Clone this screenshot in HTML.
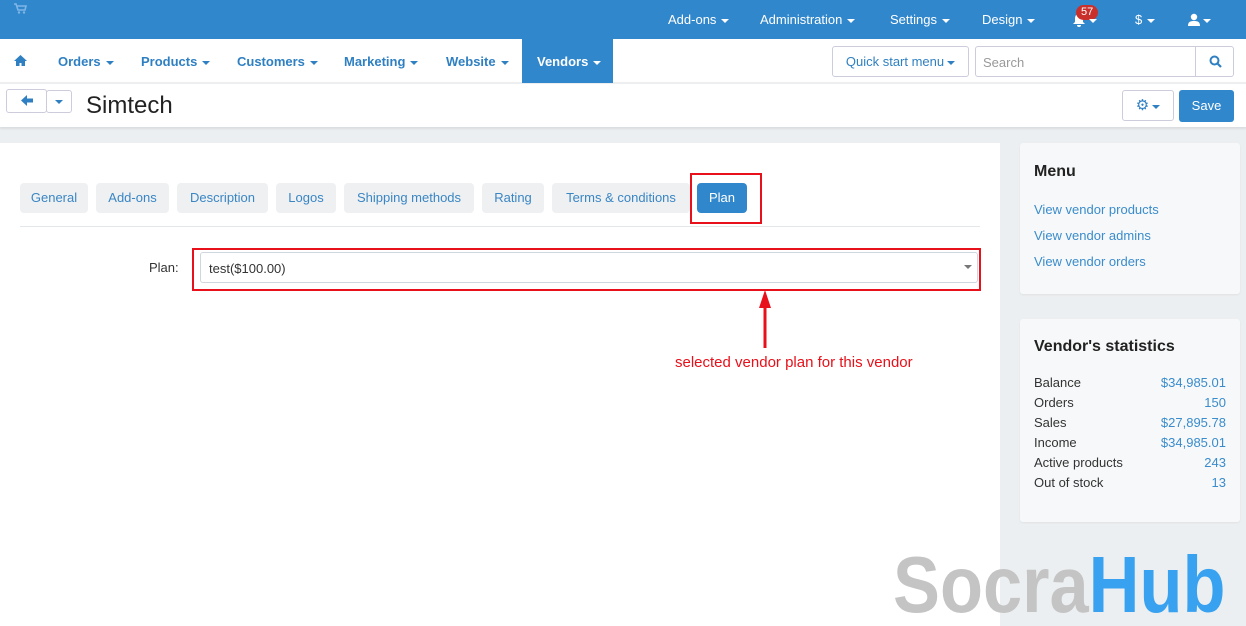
<!DOCTYPE html>
<html><head><meta charset="utf-8"><style>
*{margin:0;padding:0;box-sizing:border-box}
html,body{width:1246px;height:626px;overflow:hidden}
body{background:#eceff1;font-family:"Liberation Sans",Arial,sans-serif;font-size:13px;position:relative}
.a{position:absolute}
.top{left:0;top:0;width:1246px;height:39px;background:#3187cc}
.top span{position:absolute;top:12px;color:#fff;font-size:13px}
.car{display:inline-block;border-left:4px solid transparent;border-right:4px solid transparent;border-top:4px solid currentColor;vertical-align:middle;margin-left:5px}
.nav{left:0;top:39px;width:1246px;height:44px;background:#fff;border-bottom:1px solid #eee}
.nav span{position:absolute;top:15px;color:#2f80c2;font-weight:bold;font-size:13px}
.bar{left:0;top:84px;width:1246px;height:43px;background:#fff;box-shadow:0 2px 2px rgba(0,0,0,.08)}
.btn{position:absolute;border:1px solid #ccd;border-radius:3px;background:#fff}
.tab{position:absolute;top:183px;height:30px;background:#eef0f2;border-radius:4px;color:#3a86c4;font-size:13px;line-height:30px;text-align:center}
.card{position:absolute;left:1020px;width:220px;background:#f7f8f9;border-radius:3px;box-shadow:0 1px 2px rgba(0,0,0,.06)}
.card a{display:block;color:#3a8ccc;font-size:13px;text-decoration:none}
.row{display:flex;justify-content:space-between;font-size:13px;color:#333;height:20px;line-height:20px}
.row b{font-weight:normal;color:#3a8ccc}
</style></head><body>
<div class="a top">
<svg class="a" style="left:14px;top:3px" width="13" height="11" viewBox="0 0 13 11"><path d="M0 1h2l2 6h7l1-4H3" fill="none" stroke="#7fb6e6" stroke-width="1.6"/><circle cx="5" cy="9.5" r="1.2" fill="#7fb6e6"/><circle cx="10" cy="9.5" r="1.2" fill="#7fb6e6"/></svg>
<span style="left:668px">Add-ons<i class="car"></i></span>
<span style="left:760px">Administration<i class="car"></i></span>
<span style="left:890px">Settings<i class="car"></i></span>
<span style="left:982px">Design<i class="car"></i></span>
<svg class="a" style="left:1072px;top:13px" width="14" height="14" viewBox="0 0 14 14"><path d="M7 1c3 0 4 2 4 5v3l2 2H1l2-2V6c0-3 1-5 4-5z M5 12h4a2 2 0 0 1-4 0z" fill="#fff"/></svg>
<div class="a" style="left:1076px;top:5px;background:#c9302c;color:#fff;font-size:11px;border-radius:8px;padding:0 5px;height:15px;line-height:15px">57</div>
<span style="left:1089px;top:12px"><i class="car" style="margin:0"></i></span>
<span style="left:1135px">$<i class="car"></i></span>
<svg class="a" style="left:1188px;top:13px" width="12" height="13" viewBox="0 0 12 13"><circle cx="6" cy="4" r="3.2" fill="#fff"/><path d="M0 13c0-4 2-5 6-5s6 1 6 5z" fill="#fff"/></svg>
<span style="left:1203px"><i class="car" style="margin:0"></i></span>
</div>
<div class="a nav">
<svg class="a" style="left:14px;top:16px" width="13" height="11" viewBox="0 0 13 11"><path d="M6.5 0L0 6h2v5h3.5V8h2v3H11V6h2z" fill="#2f80c2"/></svg>
<span style="left:58px">Orders<i class="car"></i></span>
<span style="left:141px">Products<i class="car"></i></span>
<span style="left:237px">Customers<i class="car"></i></span>
<span style="left:344px">Marketing<i class="car"></i></span>
<span style="left:446px">Website<i class="car"></i></span>
<div class="a" style="left:522px;top:0;width:91px;height:44px;background:#3187cc"></div>
<span style="left:537px;color:#fff">Vendors<i class="car"></i></span>
<div class="btn" style="left:832px;top:7px;width:137px;height:31px;color:#2f80c2;font-size:13px;line-height:29px;text-align:center">Quick start menu<i class="car" style="margin-left:3px"></i></div>
<div class="btn" style="left:975px;top:7px;width:259px;height:31px"><span style="left:7px;top:8px;color:#999;font-weight:normal">Search</span><div class="a" style="left:219px;top:0;width:1px;height:29px;background:#ccd"></div>
<svg class="a" style="left:233px;top:8px" width="13" height="13" viewBox="0 0 13 13"><circle cx="5.5" cy="5.5" r="4" fill="none" stroke="#2f80c2" stroke-width="2"/><path d="M8.5 8.5l3.5 3.5" stroke="#2f80c2" stroke-width="2.2"/></svg></div>
</div>
<div class="a bar">
<div class="btn" style="left:6px;top:5px;width:41px;height:24px"><svg class="a" style="left:14px;top:5px" width="12" height="11" viewBox="0 0 12 11"><path d="M6 0L0 5.5 6 11V7.5h6v-4H6z" fill="#2f80c2"/></svg></div>
<div class="btn" style="left:46px;top:6px;width:26px;height:23px;color:#2f80c2;text-align:center;line-height:20px"><i class="car" style="margin:0"></i></div>
<div class="a" style="left:86px;top:8px;font-size:24px;color:#222">Simtech</div>
<div class="btn" style="left:1122px;top:6px;width:52px;height:31px;color:#2f80c2;line-height:29px;text-align:center"><span style="font-size:15px">⚙</span><i class="car" style="margin-left:3px"></i></div>
<div class="a" style="left:1179px;top:6px;width:55px;height:32px;background:#3187cc;border-radius:3px;color:#fff;text-align:center;line-height:32px">Save</div>
</div>
<div class="a" style="left:0;top:143px;width:1000px;height:483px;background:#fff"></div>
<div class="tab" style="left:20px;width:68px">General</div>
<div class="tab" style="left:96px;width:73px">Add-ons</div>
<div class="tab" style="left:177px;width:91px">Description</div>
<div class="tab" style="left:276px;width:60px">Logos</div>
<div class="tab" style="left:344px;width:130px">Shipping methods</div>
<div class="tab" style="left:482px;width:62px">Rating</div>
<div class="tab" style="left:552px;width:138px">Terms &amp; conditions</div>
<div class="tab" style="left:697px;width:50px;background:#3187cc;color:#fff">Plan</div>
<div class="a" style="left:690px;top:173px;width:72px;height:51px;border:2px solid #e8101a"></div>
<div class="a" style="left:20px;top:226px;width:960px;height:1px;background:#e3e6ea"></div>
<div class="a" style="left:149px;top:260px;color:#333">Plan:</div>
<div class="a" style="left:200px;top:252px;width:778px;height:31px;border:1px solid #cfd6de;border-radius:3px;background:#fff"><span class="a" style="left:8px;top:8px;color:#333">test($100.00)</span><i class="a car" style="right:5px;top:12px;color:#777"></i></div>
<div class="a" style="left:192px;top:248px;width:789px;height:43px;border:2px solid #e8101a"></div>
<svg class="a" style="left:755px;top:290px" width="20" height="60" viewBox="0 0 20 60"><path d="M10 58L10 14" stroke="#e8101a" stroke-width="3"/><path d="M10 0L4 18h12z" fill="#e8101a"/></svg>
<div class="a" style="left:675px;top:354px;color:#e8101a;font-size:15px">selected vendor plan for this vendor</div>
<div class="card" style="top:143px;height:151px;padding:20px 14px">
<div style="font-weight:bold;font-size:16px;color:#222;margin-bottom:21px">Menu</div>
<a style="margin-bottom:11px">View vendor products</a><a style="margin-bottom:11px">View vendor admins</a><a>View vendor orders</a></div>
<div class="card" style="top:319px;height:203px;padding:19px 14px">
<div style="font-weight:bold;font-size:16px;color:#222;margin-bottom:17px">Vendor's statistics</div>
<div class="row">Balance<b>$34,985.01</b></div><div class="row">Orders<b>150</b></div><div class="row">Sales<b>$27,895.78</b></div><div class="row">Income<b>$34,985.01</b></div><div class="row">Active products<b>243</b></div><div class="row">Out of stock<b>13</b></div></div>
<div class="a" style="left:893px;top:540px;font-size:80px;font-weight:bold;line-height:90px;color:#c4c4c4;transform:scaleX(0.88);transform-origin:0 0;white-space:nowrap">Socra<span style="color:#38a2f0">Hub</span></div>
</body></html>
